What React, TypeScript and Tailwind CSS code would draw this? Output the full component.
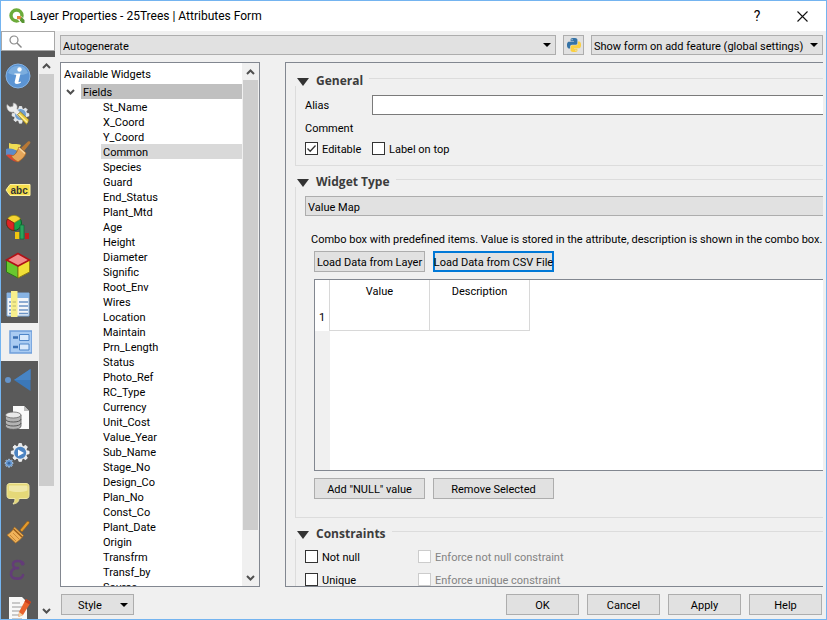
import type { ReactNode } from "react";

const fields = [
  "St_Name", "X_Coord", "Y_Coord", "Common", "Species", "Guard", "End_Status", "Plant_Mtd",
  "Age", "Height", "Diameter", "Signific", "Root_Env", "Wires", "Location", "Maintain",
  "Prn_Length", "Status", "Photo_Ref", "RC_Type", "Currency", "Unit_Cost", "Value_Year",
  "Sub_Name", "Stage_No", "Design_Co", "Plan_No", "Const_Co", "Plant_Date", "Origin",
  "Transfrm", "Transf_by", "Source",
];

function Svg({ children }: { children: ReactNode }) {
  return (
    <svg viewBox="0 0 28 28" className="size-7" aria-hidden="true">
      {children}
    </svg>
  );
}

const gear =
  "M12.4 2h3.2l.6 3 2 .8 2.6-1.7 2.2 2.2-1.7 2.6.8 2 3 .6v3.2l-3 .6-.8 2 1.7 2.6-2.2 2.2-2.6-1.7-2 .8-.6 3h-3.2l-.6-3-2-.8-2.6 1.7L5 19.900l1.700-2.600-.8-2-3-.6v-3.200l3-.6.8-2L5 6.300l2.200-2.200 2.600 1.700 2-.8z";

const pages: { name: string; icon: ReactNode }[] = [
  {
    name: "Information",
    icon: (
      <Svg>
        <circle cx="14" cy="14" r="12" fill="#5b94d3" stroke="#86b3e3" />
        <path d="M4 11a10.500 10.500 0 0 1 20 0c-6 3-14 3-20 0z" fill="#7badde" />
        <circle cx="15.500" cy="7.500" r="2.200" fill="#fff" />
        <path d="M10.500 11.500h6l-2 8c-.2 1 .6 1 2 0l.6.8c-2 2-7 2.500-6.400-.6l1.500-6.200c.2-.7-.2-.9-1.900-1z" fill="#fff" />
      </Svg>
    ),
  },
  {
    name: "Source",
    icon: (
      <Svg>
        <path d={gear} transform="translate(6 5) scale(.75)" fill="#dfe6ec" stroke="#f6f6f6" />
        <circle cx="16.500" cy="14.500" r="5.500" fill="#6f9fd0" />
        <path d="M3 4.500 6 7l3-.8.300-3.200c3 .4 4.700 3 3.500 6l6 6-3 3-6.200-6C6 13 2 10 3 4.500z" fill="#eee" stroke="#aaa" strokeWidth=".6" />
        <path d="m13.500 14.500 3-2.500 8.500 8-2.500 4.500z" fill="#e8cb43" stroke="#8c7520" strokeWidth=".8" />
        <path d="m14.500 14 9 8.500" stroke="#fff19a" strokeWidth="1.500" />
      </Svg>
    ),
  },
  {
    name: "Symbology",
    icon: (
      <Svg>
        <path d="M5 5c4 2 8 0 12 2l-3 6-9-2z" fill="#efdc54" />
        <path d="M2 11c5-1 8 0 11 2l-3 5-8-1z" fill="#5d8bc7" />
        <path d="M2 17c4-1 8 0 11 2l3 4c-5 2-9-1-14-6z" fill="#dc4432" />
        <path d="m15 9 7 6c-1 4-5 7-8 9-3-2-5-3-7-6 4 0 6-4 8-9z" fill="#e5a65a" stroke="#a96522" strokeWidth=".8" />
        <path d="m17 10 7-6.500c2-1 3 1 2 2l-6 7.500z" fill="#b77835" />
        <path d="m15 10 6 5.500" stroke="#f7d59b" strokeWidth="1.500" />
      </Svg>
    ),
  },
  {
    name: "Labels",
    icon: (
      <Svg>
        <path d="M2 14 6 8.500h20v11H6z" fill="#f6df4e" stroke="#fff2a0" />
        <text x="6.500" y="17.500" fontSize="10" fontWeight="700" fontFamily="Liberation Sans, sans-serif" fill="#343434">abc</text>
      </Svg>
    ),
  },
  {
    name: "Diagrams",
    icon: (
      <Svg>
        <circle cx="10" cy="9" r="7.500" fill="#19a34a" stroke="#0a5f2a" />
        <path d="M10 9 3.500 5A7.500 7.500 0 0 1 16.500 5z" fill="#f5d533" stroke="#9a7d10" strokeWidth=".7" />
        <path d="M10 9 3.500 5c-2.500 5 0 10.500 6.500 11.500z" fill="#dd2525" stroke="#7f1414" strokeWidth=".7" />
        <path d="M11 18h4.500v7H11z" fill="#f1c40f" />
        <path d="M16 11h4v14h-4z" fill="#2aa45c" stroke="#0f6935" strokeWidth=".7" />
        <path d="M21 19h4v6h-4z" fill="#c01f1f" />
      </Svg>
    ),
  },
  {
    name: "3D View",
    icon: (
      <Svg>
        <path d="m2.500 8 11.500 5v13L2.500 20z" fill="#69c82f" stroke="#2b7717" />
        <path d="m25.500 8-11.500 5v13l11.500-6z" fill="#f1df37" stroke="#8d7d12" />
        <path d="m14 1.500 11.500 6.500L14 14 2.500 8z" fill="#f28a8a" stroke="#b01217" strokeWidth="1.600" />
      </Svg>
    ),
  },
  {
    name: "Fields",
    icon: (
      <Svg>
        <path d="M3 3h22v23H3z" fill="#f4f6f8" stroke="#7fabdc" />
        <path d="M3 3h22v5H3z" fill="#88b4e4" />
        <path d="M5 12h4m6 0h9M5 16h4m6 0h9M5 20h4m6 0h9M5 23.500h4m6 0h9" stroke="#6b93c4" strokeWidth="1.400" />
        <path d="M7 1h6.500v26H7z" fill="#f7ef8c" />
        <path d="M8.500 12h3.500m-3.500 4h3.500m-3.500 4h3.500" stroke="#b9b670" />
      </Svg>
    ),
  },
  {
    name: "Attributes Form",
    icon: (
      <Svg>
        <path d="M6 3h22v22H6z" fill="#a9cbf2" stroke="#6f9fda" strokeWidth="1.500" />
        <path d="M15.500 6.500h9.500v6h-9.500zM15.500 16h9.500v6h-9.500z" fill="#d9e9fb" stroke="#4f86c9" />
        <path d="M9 9.500h5M9 19h5" stroke="#3a6fb3" strokeWidth="2.400" />
      </Svg>
    ),
  },
  {
    name: "Joins",
    icon: (
      <Svg>
        <circle cx="4" cy="14" r="3" fill="#6594ca" />
        <path d="M26.500 3v22L10 14z" fill="#3b78b9" />
        <path d="M26.500 3v11H10z" fill="#4784c5" />
      </Svg>
    ),
  },
  {
    name: "Auxiliary Storage",
    icon: (
      <Svg>
        <path d="M9 2h11l5 5v18H9z" fill="#fafafa" />
        <path d="M20 2v5h5z" fill="#bbb" />
        <path d="M1.500 11v11c0 4.500 15.500 4.500 15.500 0V11z" fill="#b3b3b3" stroke="#555" strokeWidth=".8" />
        <path d="M1.500 15c0 4 15.500 4 15.500 0M1.500 19c0 4 15.500 4 15.500 0" fill="none" stroke="#5a5a5a" />
        <ellipse cx="9.250" cy="11" rx="7.750" ry="3" fill="#e9e9e9" stroke="#666" strokeWidth=".8" />
      </Svg>
    ),
  },
  {
    name: "Actions",
    icon: (
      <Svg>
        <path d={gear} transform="translate(5 0) scale(.8)" fill="#e8ebee" stroke="#fff" />
        <circle cx="16.200" cy="10.800" r="6" fill="#4c84c2" />
        <path d="m14 7.500 6 3.400-6 3.400z" fill="#fff" />
        <path d={gear} transform="translate(0 16.500) scale(.36)" fill="#5e92cf" stroke="#b7d2ef" strokeWidth="2" />
        <circle cx="5" cy="21.300" r="1.300" fill="#37669d" />
      </Svg>
    ),
  },
  {
    name: "Display",
    icon: (
      <Svg>
        <path d="M6 3.500h16c2 0 3 1 3 3v9c0 2-1 3-3 3h-7c0 3-2 5-6 5.500 1.500-2 2-3 2-5.500H6c-2 0-3-1-3-3v-9c0-2 1-3 3-3z" fill="#e5d878" stroke="#f0e7a2" />
        <path d="M6 5.500h16c1 0 1.500.5 1.500 2v3c-6 2-13 2-18.500 0v-3c0-1.500 0-2 1-2z" fill="#f0e8a8" />
      </Svg>
    ),
  },
  {
    name: "Rendering",
    icon: (
      <Svg>
        <path d="m16 12 7-8.500c1.500-1 3 .5 2 2l-7 8.500z" fill="#e39a2d" stroke="#8f5711" strokeWidth=".6" />
        <path d="m10.500 9 9 8.500c-2 3-5 5.500-8 7.500L3 17c3-2 5.500-4 7.500-8z" fill="#efb25a" stroke="#a96a1a" strokeWidth=".7" />
        <path d="m9.500 11 8.500 8" stroke="#9a5c18" strokeWidth="1.500" />
        <path d="m6 17 6 6m-3-8 6 6" stroke="#c98836" />
      </Svg>
    ),
  },
  {
    name: "Variables",
    icon: (
      <Svg>
        <path
          d="M19 8c-1-4-10-4-10 .5 0 3 3 4 6 3.500C10 11.500 7 14 7 18c0 6 11 6 12 1"
          fill="none"
          stroke="#633c78"
          strokeWidth="2.600"
          strokeLinecap="round"
        />
        <circle cx="18.500" cy="7.500" r="2" fill="#633c78" />
      </Svg>
    ),
  },
  {
    name: "Metadata",
    icon: (
      <Svg>
        <path d="M5 3h13l5 5v20H5z" fill="#f8f8f8" />
        <path d="M8 9h8M8 13h10M8 17h9M8 21h8M8 25h10" stroke="#999" strokeWidth="1.200" />
        <path d="m22 5 5 3-8 13-4.500 2 .5-5z" fill="#e8622d" />
        <path d="m22 5 5 3-1.500 2.500-5-3z" fill="#c33d1d" />
        <path d="m15 18 4 3-4.500 2z" fill="#f2cf9d" />
      </Svg>
    ),
  },
];

function Chevron({ down = false }: { down?: boolean }) {
  return (
    <svg viewBox="0 0 9 6" className="h-[6px] w-[9px]" aria-hidden="true">
      <path d={down ? "M1 1l3.500 3.500L8 1" : "M1 5l3.500-3.500L8 5"} fill="none" stroke="#505050" strokeWidth="2" />
    </svg>
  );
}

function ScrollBar({ thumb }: { thumb: string }) {
  return (
    <div className="flex w-[17px] shrink-0 flex-col bg-[#f0f0f0] px-px">
      <div className="grid h-[17px] shrink-0 place-items-center"><Chevron /></div>
      <div className="min-h-0 flex-1">
        <div className={"w-full bg-[#cdcdcd] " + thumb} />
      </div>
      <div className="grid h-[17px] shrink-0 place-items-center"><Chevron down /></div>
    </div>
  );
}

function DropArrow() {
  return (
    <svg viewBox="0 0 8 4" className="h-1 w-2 shrink-0" aria-hidden="true">
      <path d="M0 0h8L4 4z" fill="#000" />
    </svg>
  );
}

function Combo({ label, value, className, arrow = true }: { label: string; value: string; className: string; arrow?: boolean }) {
  return (
    <div className={"relative h-5 " + className}>
      <select
        aria-label={label}
        className={
          "block size-full appearance-none border border-[#adadad] bg-[#e1e1e1] pt-[2px] pl-[2px] outline-none " +
          (arrow ? "pr-4" : "border-r-0")
        }
      >
        <option>{value}</option>
      </select>
      {arrow && (
        <span className="pointer-events-none absolute inset-y-0 right-[5px] flex items-center">
          <DropArrow />
        </span>
      )}
    </div>
  );
}

function Check({ label, checked = false, disabled = false }: { label: string; checked?: boolean; disabled?: boolean }) {
  return (
    <label className={"flex h-[13px] items-center gap-1 " + (disabled ? "text-[#838383]" : "")}>
      <span className="grid size-[13px] shrink-0">
        <input
          type="checkbox"
          defaultChecked={checked}
          disabled={disabled}
          className="peer col-start-1 row-start-1 size-[13px] appearance-none border border-[#333] bg-white disabled:border-[#ccc]"
        />
        <svg viewBox="0 0 13 13" className="pointer-events-none invisible col-start-1 row-start-1 peer-checked:visible" aria-hidden="true">
          <path d="M2.500 6.500 5.200 9.300 10.500 3.500" fill="none" stroke="#333" strokeWidth="1.300" />
        </svg>
      </span>
      <span className="pt-[2px] whitespace-nowrap">{label}</span>
    </label>
  );
}

function Group({ title, children, className }: { title: string; children: ReactNode; className: string }) {
  return (
    <section className="pl-[9px]">
      <header className="flex h-[14px] items-start">
        <svg viewBox="0 0 12 8" className="mt-[6px] ml-[2px] h-2 w-3 shrink-0" aria-hidden="true">
          <path d="M0 0h12L6 8z" fill="#333" />
        </svg>
        <h2 className="ml-[7px] font-['Open_Sans',sans-serif] text-[12px] leading-[18px] font-bold whitespace-nowrap text-[#3c3c3c]">{title}</h2>
        <span className="mt-[6px] ml-[6px] h-px flex-1 bg-[#dcdcdc]" />
      </header>
      <div className={"border-b border-l border-[#dcdcdc] pl-[9px] " + className}>{children}</div>
    </section>
  );
}

function Button({ children, className }: { children: ReactNode; className: string }) {
  return (
    <button type="button" className={"flex h-[21px] items-center justify-center bg-[#e1e1e1] pt-px whitespace-nowrap " + className}>
      {children}
    </button>
  );
}

const pythonHalf =
  "M14.250.18l.9.2.73.26.59.3.45.32.34.34.25.34.16.33.1.3.04.26.02.2-.01.13V8.500l-.05.63-.13.55-.21.46-.26.38-.3.31-.33.25-.35.19-.35.14-.33.1-.3.07-.26.04-.21.02H8.770l-.69.05-.59.14-.5.22-.41.27-.33.32-.27.35-.2.36-.15.37-.1.35-.07.32-.04.27-.02.21v3.060H3.170l-.21-.03-.28-.07-.32-.12-.35-.18-.36-.26-.36-.36-.35-.46-.32-.59-.28-.73-.21-.88-.14-1.050-.05-1.230.06-1.220.16-1.040.24-.87.32-.71.36-.57.4-.44.42-.33.42-.24.4-.16.36-.1.32-.05.24-.01h.16l.06.01h8.160v-.83H6.180l-.01-2.750-.02-.37.05-.34.11-.31.17-.28.25-.26.31-.23.38-.2.44-.18.51-.15.58-.12.64-.1.71-.06.77-.04.84-.02 1.270.05zm-6.300 1.980l-.23.33-.08.41.08.41.23.34.33.22.41.09.41-.09.33-.22.23-.34.08-.41-.08-.41-.23-.33-.33-.22-.41-.09-.41.09z";

export default function App() {
  return (
    <div className="flex h-screen flex-col overflow-hidden border border-[#74b4f0] bg-[#f0f0f0] font-[Roboto,sans-serif] text-[11px] leading-[17px] text-black">
      <header className="flex h-[30px] shrink-0 items-center bg-white pr-[18px] pl-2">
        <svg viewBox="0 0 16 16" className="size-4" aria-hidden="true">
          <circle cx="7.500" cy="7.500" r="5.500" fill="none" stroke="#6cab3a" strokeWidth="3.400" />
          <path d="M8 8h4l4 4v3.500h-3.500L8 11z" fill="#fff" />
          <path d="M8 8h3.500l1 1v2.500H11L8 11z" fill="#e8823a" />
          <path d="m11 11.500 1.500-2.500 3 3v3H13l-2-2.500z" fill="#589632" />
        </svg>
        <h1 className="ml-[5px] flex-1 text-[12px] leading-4">Layer Properties - 25Trees | Attributes Form</h1>
        <button type="button" className="w-5 text-[14px] leading-4">?</button>
        <button type="button" aria-label="Close" className="ml-[30px]">
          <svg viewBox="0 0 11 11" className="size-[11px]" aria-hidden="true">
            <path d="M.5.5l10 10m0-10l-10 10" stroke="#111" strokeWidth="1.100" />
          </svg>
        </button>
      </header>

      <div className="flex min-h-0 flex-1">
        <aside className="flex w-[54px] shrink-0 flex-col bg-[#5a5a5a]">
          <label className="flex h-5 shrink-0 items-center border border-[#a8a8a8] bg-white pl-[7px]">
            <svg viewBox="0 0 13 13" className="size-[13px] shrink-0" aria-hidden="true">
              <circle cx="5" cy="5" r="4" fill="none" stroke="#888" strokeWidth="1.200" />
              <path d="m8 8 4.500 4.500" stroke="#888" strokeWidth="1.400" />
            </svg>
            <input type="search" aria-label="Search" className="w-full min-w-0 outline-none" />
          </label>
          <div className="mt-[6px] flex min-h-0 flex-1">
            <nav className="flex min-w-0 flex-1 flex-col overflow-hidden">
              {pages.map((page) => (
                <button
                  key={page.name}
                  type="button"
                  aria-label={page.name}
                  className={
                    "flex h-[38px] shrink-0 items-center pl-[3px] " +
                    (page.name === "Attributes Form" ? "bg-[#f0f0f0]" : "")
                  }
                >
                  {page.icon}
                </button>
              ))}
            </nav>
            <ScrollBar thumb="h-[78%]" />
          </div>
        </aside>

        <main className="flex min-w-0 flex-1 flex-col pr-[3px] pl-[5px]">
          <div className="mt-1 flex shrink-0">
            <Combo label="Form layout" value="Autogenerate" className="min-w-0 flex-1" />
            <button type="button" aria-label="Python init function" className="ml-[7px] grid h-5 w-[21px] shrink-0 place-items-center border border-[#adadad] bg-[#e1e1e1]">
              <svg viewBox="0 0 24 24" className="size-[14px]" aria-hidden="true">
                <path d={pythonHalf} fill="#3573a6" />
                <path d={pythonHalf} fill="#fbd040" transform="rotate(180 12 12)" />
              </svg>
            </button>
            <Combo label="Show form" value="Show form on add feature (global settings)" className="ml-[7px] w-[232px] shrink-0" />
          </div>

          <div className="mt-[7px] flex min-h-0 flex-1">
            <div className="flex w-[200px] shrink-0 border border-[#828790] bg-white">
              <div className="min-w-0 flex-1 overflow-hidden">
                <div className="h-[21px] pt-[3px] pl-[3px]">Available Widgets</div>
                <div className="flex h-[15px]">
                  <span className="grid w-[19px] place-items-center"><Chevron down /></span>
                  <span className="ml-px flex-1 bg-[#c0c0c0] pl-[2px]">Fields</span>
                </div>
                <ul className="pl-10">
                  {fields.map((field) => (
                    <li key={field} className={"h-[15px] pl-[2px] " + (field === "Common" ? "bg-[#d9d9d9]" : "")}>
                      {field}
                    </li>
                  ))}
                </ul>
              </div>
              <ScrollBar thumb="h-[92%]" />
            </div>

            <div className="ml-[25px] min-w-0 flex-1 overflow-hidden border border-r-0 border-[#828790] pt-[9px]">
              <Group title="General" className="h-20 pt-[9px]">
                <div className="flex h-5 items-center">
                  <label htmlFor="alias" className="w-[67px] shrink-0 pt-px">Alias</label>
                  <input id="alias" type="text" className="h-5 min-w-0 flex-1 border border-r-0 border-[#7a7a7a] bg-white px-1 outline-none" />
                </div>
                <div className="mt-[5px] h-[15px]">Comment</div>
                <div className="mt-[7px] flex">
                  <div className="w-[67px]"><Check label="Editable" checked /></div>
                  <Check label="Label on top" />
                </div>
              </Group>

              <div className="h-[7px]" />
              <Group title="Widget Type" className="pt-[9px] pb-[18px]">
                <Combo label="Widget type" value="Value Map" className="" arrow={false} />
                <p className="mt-[15px] h-[15px] pl-[6px] whitespace-nowrap">
                  Combo box with predefined items. Value is stored in the attribute, description is shown in the combo box.
                </p>
                <div className="pl-[9px]">
                  <div className="mt-[5px] flex gap-2">
                    <Button className="w-[111px] border border-[#adadad]">Load Data from Layer</Button>
                    <Button className="w-[121px] border-2 border-[#0078d7]">Load Data from CSV File</Button>
                  </div>
                  <div className="mt-[7px] flex h-48 flex-col border border-r-0 border-[#828790] bg-white">
                    <table className="w-[215px] table-fixed border-separate border-spacing-0">
                      <thead>
                        <tr className="h-[23px]">
                          <td className="w-[15px] border-r border-[#d8d8d8]" />
                          <th className="border-r border-[#d8d8d8] font-normal">Value</th>
                          <th className="border-r border-[#d8d8d8] font-normal">Description</th>
                        </tr>
                      </thead>
                      <tbody>
                        <tr className="h-7">
                          <th className="border-r border-[#d8d8d8] font-normal">1</th>
                          <td className="border-r border-b border-[#d8d8d8]" />
                          <td className="border-r border-b border-[#d8d8d8]" />
                        </tr>
                      </tbody>
                    </table>
                    <div className="w-[15px] flex-1 bg-[#f0f0f0]" />
                  </div>
                  <div className="mt-[7px] flex gap-2">
                    <Button className="w-[111px] border border-[#adadad]">Add "NULL" value</Button>
                    <Button className="w-[121px] border border-[#adadad]">Remove Selected</Button>
                  </div>
                </div>
              </Group>

              <div className="h-[7px]" />
              <Group title="Constraints" className="pt-[11px] pb-4">
                <div className="grid grid-cols-[113px_1fr] gap-y-[10px]">
                  <Check label="Not null" />
                  <Check label="Enforce not null constraint" disabled />
                  <Check label="Unique" />
                  <Check label="Enforce unique constraint" disabled />
                </div>
              </Group>
            </div>
          </div>

          <footer className="flex shrink-0 gap-2 pt-[7px] pr-px pb-1 pl-px">
            <Button className="w-[73px] border border-[#adadad] pr-[5px] pl-4">
              <span className="flex-1 text-left">Style</span>
              <DropArrow />
            </Button>
            <span className="flex-1" />
            <Button className="w-[73px] border border-[#adadad]">OK</Button>
            <Button className="w-[73px] border border-[#adadad]">Cancel</Button>
            <Button className="w-[73px] border border-[#adadad]">Apply</Button>
            <Button className="w-[73px] border border-[#adadad]">Help</Button>
          </footer>
        </main>
      </div>
    </div>
  );
}
